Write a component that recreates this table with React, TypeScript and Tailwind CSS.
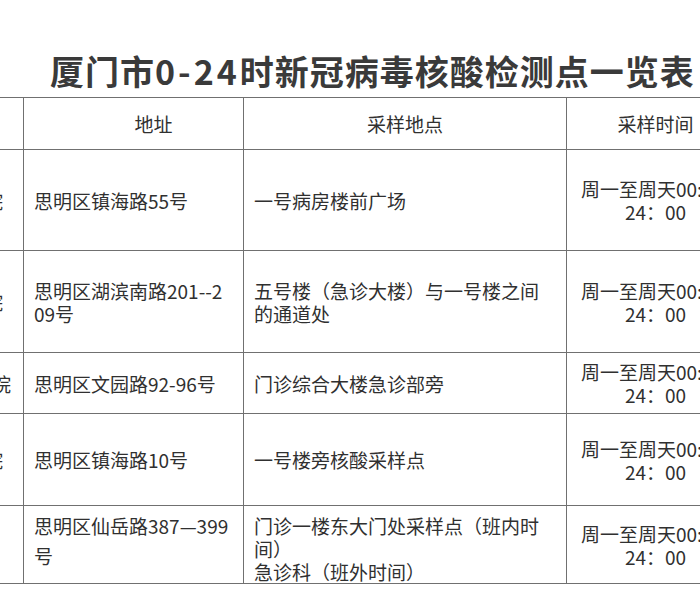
import React from "react";

type Row = {
	name: string;
	namePad: string;
	address: React.ReactNode;
	place: React.ReactNode;
	height: string;
	top?: boolean;
};

const rows: Row[] = [
	{
		name: "厦门大学附属第一医院",
		namePad: "pr-[20px]",
		address: "思明区镇海路55号",
		place: "一号病房楼前广场",
		height: "h-[101px]",
	},
	{
		name: "厦门大学附属中山医院",
		namePad: "pr-[20px]",
		address: (
			<>
				思明区湖滨南路201--2
				<br />
				09号
			</>
		),
		place: (
			<>
				五号楼（急诊大楼）与一号楼之间
				<br />
				的通道处
			</>
		),
		height: "h-[102px]",
	},
	{
		name: "厦门市中医院",
		namePad: "pr-[12px]",
		address: "思明区文园路92-96号",
		place: "门诊综合大楼急诊部旁",
		height: "h-[61px]",
	},
	{
		name: "厦门市第二医院",
		namePad: "pr-[20px]",
		address: "思明区镇海路10号",
		place: "一号楼旁核酸采样点",
		height: "h-[92px]",
	},
	{
		name: "厦门大学附属心血管病医院",
		namePad: "pr-[30px]",
		address: (
			<>
				思明区仙岳路387—399
				<br />
				号
			</>
		),
		place: (
			<>
				门诊一楼东大门处采样点（班内时
				<br />
				间）
				<br />
				急诊科（班外时间）
			</>
		),
		height: "h-[77px]",
		top: true,
	},
];

export default function App() {
	return (
		<div
			className="w-[700px] h-[600px] overflow-hidden bg-white text-[#303030]"
			style={{ fontFamily: '"Noto Sans CJK SC", "Noto Sans", sans-serif' }}
		>
			{/* Title */}
			<div className="pt-[51px] pl-[50px] h-[97px] whitespace-nowrap text-[34px] leading-[40px] font-semibold tracking-[1px] text-[#3a3a3a]">
				厦门市<span className="tracking-[3px]">0-24</span>时新冠病毒核酸检测点一览表
			</div>

			{/* Table, wider than the window: first and last columns are cut */}
			<table className="table-fixed border-collapse ml-[-237px] w-[981px] text-[19px] leading-[23px]">
				<colgroup>
					<col className="w-[260px]" />
					<col className="w-[220px]" />
					<col className="w-[323px]" />
					<col className="w-[178px]" />
				</colgroup>
				<thead>
					<tr className="h-[52px]">
						<th className="border border-[#707070] font-normal">医院名称</th>
						<th className="border border-[#707070] font-normal pl-[40px]">地址</th>
						<th className="border border-[#707070] font-normal">采样地点</th>
						<th className="border border-[#707070] font-normal">采样时间</th>
					</tr>
				</thead>
				<tbody>
					{rows.map((r, i) => (
						<tr key={i} className={r.height}>
							<td
								className={`border border-[#707070] text-right whitespace-nowrap ${r.namePad}`}
							>
								{r.name}
							</td>
							<td
								className={`border border-[#707070] px-[10px] ${r.top ? "align-top pt-[5px] leading-[30px]" : ""}`}
							>
								{r.address}
							</td>
							<td
								className={`border border-[#707070] px-[10px] ${r.top ? "align-top pt-[8px]" : ""}`}
							>
								{r.place}
							</td>
							<td className="border border-[#707070] px-[6px] text-center whitespace-nowrap">
								周一至周天00:00-
								<br />
								24：00
							</td>
						</tr>
					))}
				</tbody>
			</table>
		</div>
	);
}
